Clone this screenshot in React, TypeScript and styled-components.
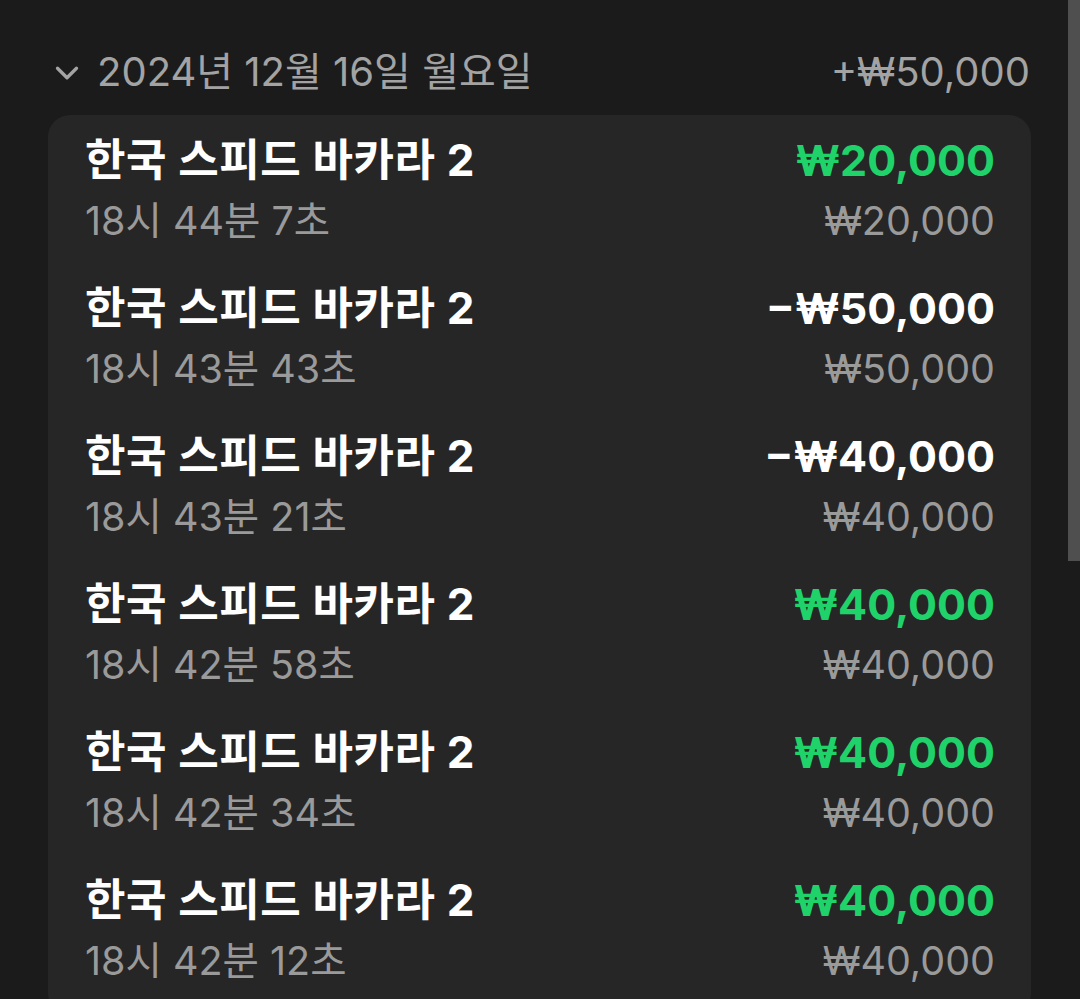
import styled, { createGlobalStyle } from 'styled-components';
import { ChevronDown } from 'lucide-react';

const GlobalStyle = createGlobalStyle`
  html, body {
    margin: 0;
    padding: 0;
    background: #1b1b1b;
    font-family: 'Inter', 'Noto Sans CJK KR', sans-serif;
    overflow: hidden;
  }
`;

type Bet = {
  time: string;
  result: string;
  stake: string;
  win: boolean;
};

const bets: Bet[] = [
  { time: '18시 44분 7초', result: '₩20,000', stake: '₩20,000', win: true },
  { time: '18시 43분 43초', result: '−₩50,000', stake: '₩50,000', win: false },
  { time: '18시 43분 21초', result: '−₩40,000', stake: '₩40,000', win: false },
  { time: '18시 42분 58초', result: '₩40,000', stake: '₩40,000', win: true },
  { time: '18시 42분 34초', result: '₩40,000', stake: '₩40,000', win: true },
  { time: '18시 42분 12초', result: '₩40,000', stake: '₩40,000', win: true },
];

const App = () => {
  return (
    <>
      <GlobalStyle />
      <Page>
        <DayHeader>
          <DayLabel>
            <ChevronDown size={38} strokeWidth={2.1} />
            <span>2024년 12월 16일 월요일</span>
          </DayLabel>
          <DayTotal>+₩50,000</DayTotal>
        </DayHeader>
        <Card>
          {bets.map((bet, i) => (
            <Row key={i}>
              <Left>
                <Title>한국 스피드 바카라 2</Title>
                <Sub>{bet.time}</Sub>
              </Left>
              <Right>
                <Amount $win={bet.win}>{bet.result}</Amount>
                <Sub>{bet.stake}</Sub>
              </Right>
            </Row>
          ))}
        </Card>
      </Page>
      <ScrollThumb />
    </>
  );
};
export default App;

const Page = styled.div`
  padding: 44px 49px 0 48px;
  height: 999px;
  box-sizing: border-box;
`;

const DayHeader = styled.div`
  display: flex;
  align-items: center;
  justify-content: space-between;
  height: 56px;
  margin-bottom: 15px;
  color: #a3a3a3;
  font-size: 40px;
  line-height: 56px;
`;

const DayLabel = styled.div`
  display: flex;
  align-items: center;
  gap: 11px;
  svg {
    color: #a3a3a3;
    margin-top: 2px;
  }
`;

const DayTotal = styled.div`
  padding-right: 1px;
`;

const Card = styled.div`
  background: #262626;
  border-radius: 22px;
  padding: 0 36px 0 37px;
  height: 900px;
`;

const Row = styled.div`
  display: flex;
  justify-content: space-between;
  align-items: flex-start;
  height: 148px;
  padding-top: 14px;
  box-sizing: border-box;
`;

const Left = styled.div`
  display: flex;
  flex-direction: column;
`;

const Right = styled.div`
  display: flex;
  flex-direction: column;
  align-items: flex-end;
`;

const Title = styled.div`
  color: #ffffff;
  font-size: 44px;
  font-weight: 700;
  line-height: 62px;
  letter-spacing: 0.6px;
`;

const Amount = styled.div<{ $win: boolean }>`
  color: ${(p) => (p.$win ? '#1fd36a' : '#ffffff')};
  font-size: 43px;
  font-weight: 700;
  line-height: 62px;
`;

const Sub = styled.div`
  color: #9a9a9a;
  font-size: 39.5px;
  line-height: 60px;
`;

const ScrollThumb = styled.div`
  position: fixed;
  top: 0;
  right: 0;
  width: 12px;
  height: 561px;
  background: #4f4f4f;
`;
